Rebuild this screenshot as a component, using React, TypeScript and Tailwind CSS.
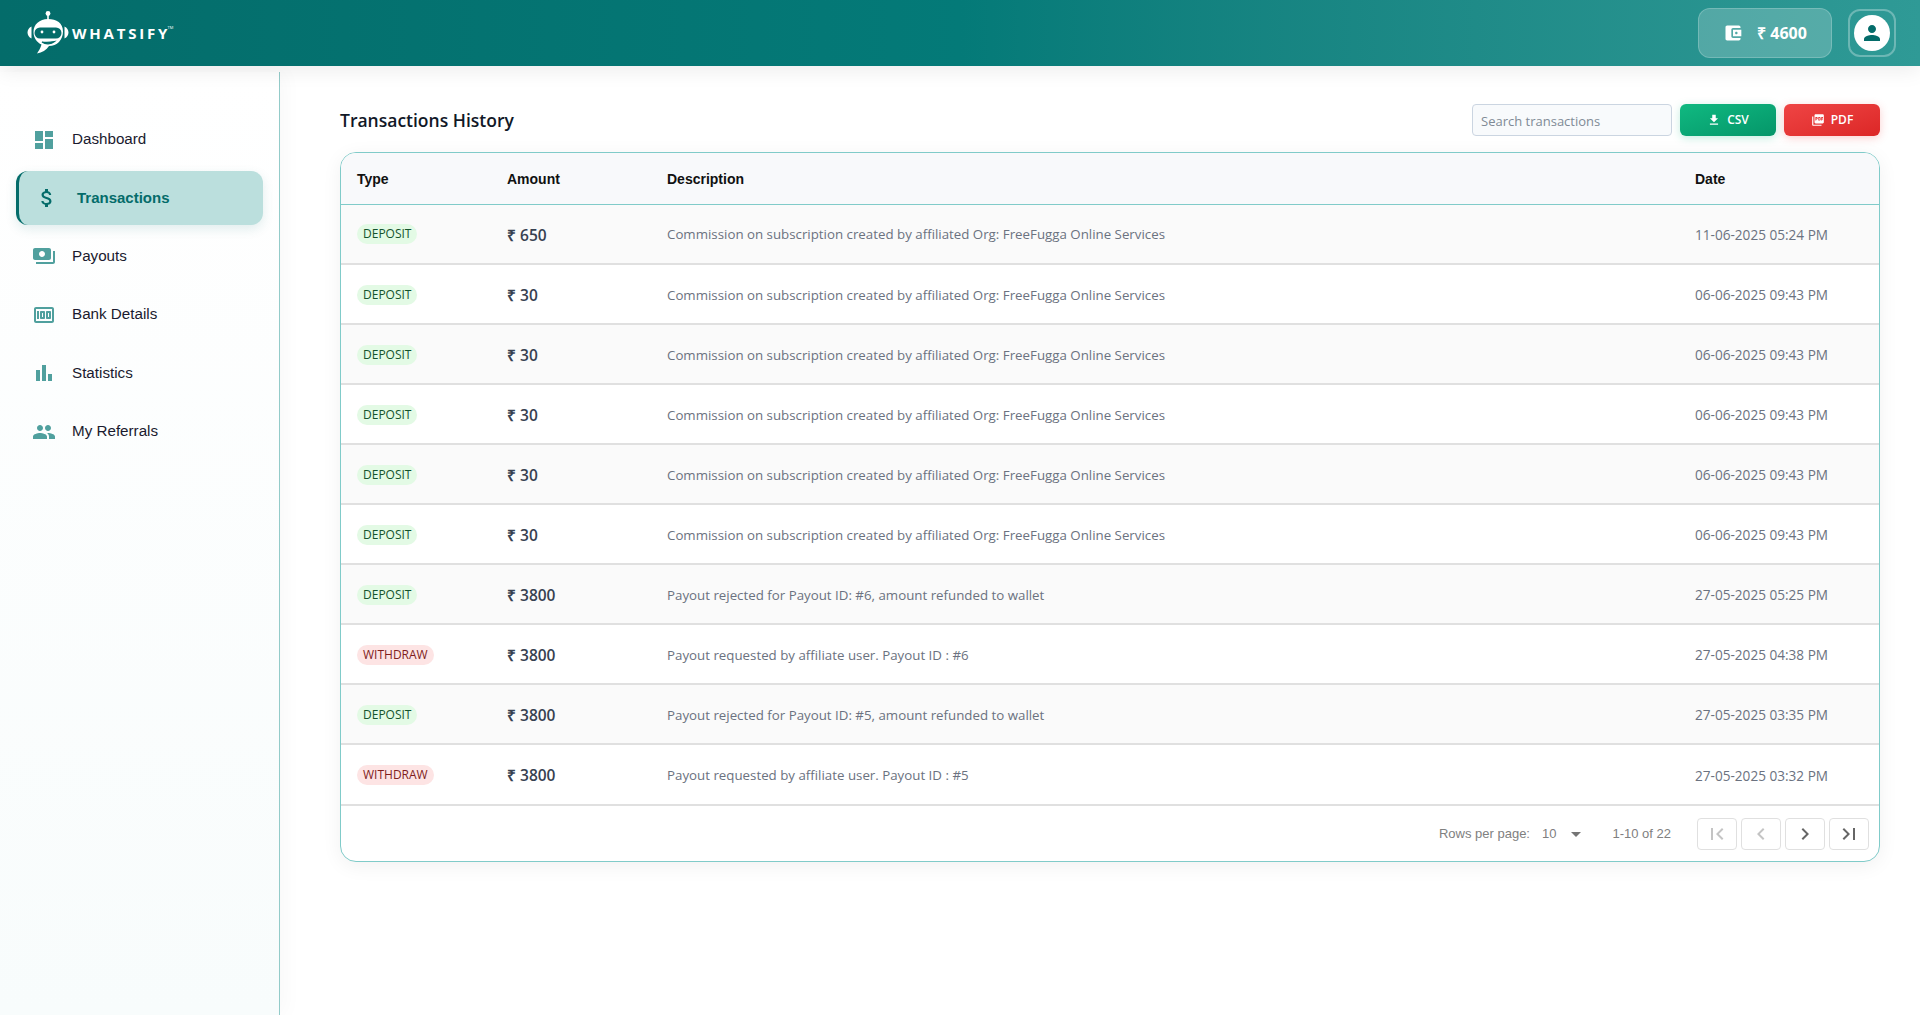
import type { ReactNode } from 'react'

const ICONS = {
  dashboard: 'M3 13h8V3H3v10zm0 8h8v-6H3v6zm10 0h8V11h-8v10zm0-18v6h8V3h-8z',
  money:
    'M11.8 10.9c-2.27-.59-3-1.2-3-2.15 0-1.09 1.01-1.85 2.7-1.85 1.78 0 2.44.85 2.5 2.1h2.21c-.07-1.72-1.12-3.3-3.21-3.81V3h-3v2.16c-1.94.42-3.5 1.68-3.5 3.61 0 2.31 1.91 3.46 4.7 4.13 2.5.6 3 1.48 3 2.41 0 .69-.49 1.79-2.7 1.79-2.06 0-2.87-.92-2.98-2.1h-2.2c.12 2.19 1.76 3.42 3.68 3.83V21h3v-2.15c1.95-.37 3.5-1.5 3.5-3.55 0-2.84-2.43-3.81-4.7-4.4z',
  payments:
    'M19 14V6c0-1.1-.9-2-2-2H3c-1.1 0-2 .9-2 2v8c0 1.1.9 2 2 2h14c1.1 0 2-.9 2-2zm-9-1c-1.66 0-3-1.34-3-3s1.34-3 3-3 3 1.34 3 3-1.34 3-3 3zm13-6v11c0 1.1-.9 2-2 2H4v-2h17V7h2z',
  pin: 'M5 8h2v8H5zm7 0H9c-.55 0-1 .45-1 1v6c0 .55.45 1 1 1h3c.55 0 1-.45 1-1V9c0-.55-.45-1-1-1zm-1 6h-1v-4h1v4zm7-6h-3c-.55 0-1 .45-1 1v6c0 .55.45 1 1 1h3c.55 0 1-.45 1-1V9c0-.55-.45-1-1-1zm-1 6h-1v-4h1v4zM20 4H4c-1.1 0-2 .9-2 2v12c0 1.1.9 2 2 2h16c1.1 0 2-.9 2-2V6c0-1.1-.9-2-2-2zm0 14H4V6h16v12z',
  bars: 'M4 9h4v11H4zm12 4h4v7h-4zm-6-9h4v16h-4z',
  people:
    'M16 11c1.66 0 2.99-1.34 2.99-3S17.66 5 16 5c-1.66 0-3 1.34-3 3s1.34 3 3 3zm-8 0c1.66 0 2.99-1.34 2.99-3S9.66 5 8 5C6.34 5 5 6.34 5 8s1.34 3 3 3zm0 2c-2.33 0-7 1.17-7 3.5V19h14v-2.5c0-2.33-4.67-3.5-7-3.5zm8 0c-.29 0-.62.02-.97.05 1.16.84 1.97 1.97 1.97 3.45V19h6v-2.5c0-2.33-4.67-3.5-7-3.5z',
  wallet:
    'M21 18v1c0 1.1-.9 2-2 2H5c-1.11 0-2-.9-2-2V5c0-1.1.89-2 2-2h14c1.1 0 2 .9 2 2v1h-9c-1.11 0-2 .9-2 2v8c0 1.1.89 2 2 2h9zm-9-2h10V8H12v8zm4-2.5c-.83 0-1.5-.67-1.5-1.5s.67-1.5 1.5-1.5 1.5.67 1.5 1.5-.67 1.5-1.5 1.5z',
  person: 'M12 12c2.21 0 4-1.79 4-4s-1.79-4-4-4-4 1.79-4 4 1.79 4 4 4zm0 2c-2.67 0-8 1.34-8 4v2h16v-2c0-2.66-5.33-4-8-4z',
  download: 'M19 9h-4V3H9v6H5l7 7 7-7zM5 18v2h14v-2H5z',
  pdf: 'M20 2H8c-1.1 0-2 .9-2 2v12c0 1.1.9 2 2 2h12c1.1 0 2-.9 2-2V4c0-1.1-.9-2-2-2zm-8.5 7.5c0 .83-.67 1.5-1.5 1.5H9v2H7.5V7H10c.83 0 1.5.67 1.5 1.5v1zm5 2c0 .83-.67 1.5-1.5 1.5h-2.5V7H15c.83 0 1.5.67 1.5 1.5v3zm4-3H19v1h1.5V11H19v2h-1.5V7h3v1.5zM9 9.5h1v-1H9v1zM4 6H2v14c0 1.1.9 2 2 2h14v-2H4V6zm10 5.5h1v-3h-1v3z',
  first: 'M18.41 16.59L13.82 12l4.59-4.59L17 6l-6 6 6 6zM6 6h2v12H6z',
  prev: 'M15.41 7.41L14 6l-6 6 6 6 1.41-1.41L10.83 12z',
  next: 'M10 6L8.59 7.41 13.17 12l-4.58 4.59L10 18l6-6z',
  last: 'M5.59 7.41L10.18 12l-4.59 4.59L7 18l6-6-6-6zM16 6h2v12h-2z',
}

function Icon({ name, className }: { name: keyof typeof ICONS; className?: string }) {
  return (
    <svg viewBox="0 0 24 24" fill="currentColor" className={className}>
      <path d={ICONS[name]} />
    </svg>
  )
}

function Logo() {
  return (
    <svg viewBox="0 0 42 48" className="h-[48px] w-[42px] shrink-0">
      <circle cx="21" cy="4.500" r="2.400" fill="#fff" />
      <rect x="20.200" y="5" width="1.600" height="6" fill="#fff" />
      <path d="M21 10C12.500 10 6.500 15.500 6.500 23c0 6 3.500 10.500 8 12.500-1 3.500-2.500 6-4.500 9 5-1 9.500-3.500 12-7.500 8 0 14-6 14-14.500S29.500 10 21 10z" fill="#fff" />
      <path d="M4.500 17.500C2 18.500.5 21 .5 23.500s1.500 5 4 6zM37.500 17.500c2.500 1 4 3.500 4 6s-1.500 5-4 6z" fill="#fff" />
      <rect x="7.500" y="18.500" width="27" height="11" rx="5.500" fill="#046c6a" />
      <circle cx="15" cy="23" r="1.400" fill="#fff" />
      <circle cx="27" cy="23" r="1.400" fill="#fff" />
      <path d="M15 33c3.500 2.500 9 2.500 12.500-.5-4 .8-8.500 1-12.500.5z" fill="#046c6a" stroke="#046c6a" strokeWidth="1.200" />
    </svg>
  )
}

const NAV: { label: string; icon: keyof typeof ICONS; active?: boolean }[] = [
  { label: 'Dashboard', icon: 'dashboard' },
  { label: 'Transactions', icon: 'money', active: true },
  { label: 'Payouts', icon: 'payments' },
  { label: 'Bank Details', icon: 'pin' },
  { label: 'Statistics', icon: 'bars' },
  { label: 'My Referrals', icon: 'people' },
]

const COMMISSION = 'Commission on subscription created by affiliated Org: FreeFugga Online Services'

const ROWS = [
  { type: 'DEPOSIT', amount: '650', desc: COMMISSION, date: '11-06-2025 05:24 PM' },
  { type: 'DEPOSIT', amount: '30', desc: COMMISSION, date: '06-06-2025 09:43 PM' },
  { type: 'DEPOSIT', amount: '30', desc: COMMISSION, date: '06-06-2025 09:43 PM' },
  { type: 'DEPOSIT', amount: '30', desc: COMMISSION, date: '06-06-2025 09:43 PM' },
  { type: 'DEPOSIT', amount: '30', desc: COMMISSION, date: '06-06-2025 09:43 PM' },
  { type: 'DEPOSIT', amount: '30', desc: COMMISSION, date: '06-06-2025 09:43 PM' },
  { type: 'DEPOSIT', amount: '3800', desc: 'Payout rejected for Payout ID: #6, amount refunded to wallet', date: '27-05-2025 05:25 PM' },
  { type: 'WITHDRAW', amount: '3800', desc: 'Payout requested by affiliate user. Payout ID : #6', date: '27-05-2025 04:38 PM' },
  { type: 'DEPOSIT', amount: '3800', desc: 'Payout rejected for Payout ID: #5, amount refunded to wallet', date: '27-05-2025 03:35 PM' },
  { type: 'WITHDRAW', amount: '3800', desc: 'Payout requested by affiliate user. Payout ID : #5', date: '27-05-2025 03:32 PM' },
]

function PageButton({ children, disabled }: { children: ReactNode; disabled?: boolean }) {
  return (
    <div
      className={`flex h-[32px] w-[40px] items-center justify-center rounded-[4px] border border-[#e0e0e0] ${
        disabled ? 'text-[#c4c4c4]' : 'text-[#666666]'
      }`}
    >
      {children}
    </div>
  )
}

export default function App() {
  return (
    <div className="flex h-[1015px] flex-col overflow-hidden bg-white font-['Liberation_Sans',sans-serif]">
      <header className="z-10 flex h-[66px] shrink-0 items-center justify-between bg-gradient-to-r from-[#046c6a] via-[#047a78] to-[#2f9a96] pl-[27px] pr-[24px] shadow-[0_4px_20px_rgba(0,0,0,0.08)]">
        <div className="flex items-center gap-[3px]">
          <Logo />
          <div className="relative font-['Open_Sans',sans-serif] text-[15px] font-bold tracking-[2.8px] text-white">
            WHATSIFY
            <span className="absolute -right-[3px] top-[3px] text-[4px] font-normal tracking-normal">TM</span>
          </div>
        </div>
        <div className="flex items-center gap-[16px]">
          <div className="flex h-[50px] w-[134px] items-center justify-center gap-[14px] rounded-[12px] border border-white/20 bg-white/20 text-white">
            <Icon name="wallet" className="size-[20px]" />
            <span className="font-['Open_Sans',sans-serif] text-[16px] font-bold">₹ 4600</span>
          </div>
          <div className="flex size-[48px] items-center justify-center rounded-[12px] border-2 border-white/30">
            <div className="flex size-[36px] items-center justify-center rounded-full bg-white text-[#046c6a]">
              <Icon name="person" className="size-[24px]" />
            </div>
          </div>
        </div>
      </header>

      <div className="flex min-h-0 flex-1">
        <aside className="mt-[6px] w-[280px] shrink-0 border-r border-[#93cbc9] bg-gradient-to-b from-white to-[#f8fcfc] px-[16px] pt-[40.500px] shadow-[4px_0_20px_rgba(0,0,0,0.03)]">
          <nav className="flex flex-col gap-[4px]">
            {NAV.map((item) =>
              item.active ? (
                <div
                  key={item.label}
                  className="flex h-[54px] items-center rounded-[12px] border-l-[3px] border-[#046c6a] bg-[#bbdfdd] pl-[16px] text-[15px] font-bold text-[#046c6a] shadow-[0_4px_12px_rgba(4,108,106,0.12)]"
                >
                  <Icon name={item.icon} className="size-[24px]" />
                  <span className="ml-[18px]">{item.label}</span>
                </div>
              ) : (
                <div key={item.label} className="flex h-[54.500px] items-center pl-[16px] text-[15.200px] text-[#1a1a2e]">
                  <Icon name={item.icon} className="size-[24px] text-[#50a09e]" />
                  <span className="ml-[16px]">{item.label}</span>
                </div>
              ),
            )}
          </nav>
        </aside>

        <main className="min-w-0 flex-1 pl-[60px] pr-[40px] pt-[38px]">
          <div className="mb-[16px] flex h-[32px] items-center justify-between">
            <h1 className="pt-[1px] font-['Open_Sans',sans-serif] text-[17.500px] font-semibold text-[#111827]">Transactions History</h1>
            <div className="flex items-center gap-[8px]">
              <input
                placeholder="Search transactions"
                className="h-[32px] w-[200px] rounded-[4px] border border-[#cbd5e1] bg-[#f8fafc] px-[8px] pt-[1px] font-['Open_Sans',sans-serif] text-[13px] placeholder:text-[#808a96]"
              />
              <div className="flex h-[32px] w-[96px] items-center justify-center gap-[6px] rounded-[6px] bg-gradient-to-br from-[#10b981] to-[#059669] font-['Open_Sans',sans-serif] text-[12px] font-semibold text-white shadow-[0_2px_8px_rgba(16,185,129,0.25)]">
                <Icon name="download" className="size-[14px]" />
                CSV
              </div>
              <div className="flex h-[32px] w-[96px] items-center justify-center gap-[6px] rounded-[6px] bg-gradient-to-br from-[#ef4444] to-[#dc2626] font-['Open_Sans',sans-serif] text-[12px] font-semibold text-white shadow-[0_2px_8px_rgba(239,68,68,0.25)]">
                <Icon name="pdf" className="size-[14px]" />
                PDF
              </div>
            </div>
          </div>

          <div className="overflow-hidden rounded-[16px] border border-[#80cbc9] bg-white shadow-[0_4px_20px_rgba(0,0,0,0.06)]">
            <table className="w-full table-fixed border-collapse">
              <thead>
                <tr className="h-[51px] border-b border-[#80cbc9] bg-[#f8f9fb] text-left text-[14px] text-[#111111]">
                  <th className="w-[166px] pl-[16px] pt-[2px] font-bold">Type</th>
                  <th className="w-[160px] pt-[2px] font-bold">Amount</th>
                  <th className="w-[1028px] pt-[2px] font-bold">Description</th>
                  <th className="pt-[2px] font-bold">Date</th>
                </tr>
              </thead>
              <tbody className="font-['Open_Sans',sans-serif]">
                {ROWS.map((row, i) => (
                  <tr
                    key={i}
                    className={`border-b-2 border-[#e0e0e0] ${i === ROWS.length - 1 ? 'h-[61px]' : 'h-[60px]'} ${
                      i % 2 === 0 ? 'bg-[#fafafa]' : 'bg-white'
                    }`}
                  >
                    <td className="pl-[16px] pt-[1px] leading-none">
                      <span
                        className={`inline-flex h-[20px] items-center rounded-full px-[6px] align-middle text-[12px] font-medium ${
                          row.type === 'DEPOSIT' ? 'bg-[#e3fae5] text-[#14532d]' : 'bg-[#fde4e4] text-[#7f1d1d]'
                        }`}
                      >
                        {row.type}
                      </span>
                    </td>
                    <td className="pt-[3px] text-[15.500px] font-semibold text-[#374151]">₹ {row.amount}</td>
                    <td className="pt-[3px] text-[13.300px] text-[#6b7280]">{row.desc}</td>
                    <td className="pt-[3px] text-[13.600px] text-[#6b7280]">{row.date}</td>
                  </tr>
                ))}
              </tbody>
            </table>
            <div className="flex h-[55px] items-center justify-end pr-[10px] pt-[1px] text-[13px] text-[#808080]">
              <span>Rows per page:</span>
              <span className="ml-[12px]">10</span>
              <svg viewBox="0 0 10 5" className="ml-[15px] h-[5px] w-[10px]" fill="#757575">
                <path d="M0 0h10L5 5z" />
              </svg>
              <span className="ml-[31px] mr-[26px]">1-10 of 22</span>
              <div className="flex gap-[4px]">
                <PageButton disabled><Icon name="first" className="size-[24px]" /></PageButton>
                <PageButton disabled><Icon name="prev" className="size-[24px]" /></PageButton>
                <PageButton><Icon name="next" className="size-[24px]" /></PageButton>
                <PageButton><Icon name="last" className="size-[24px]" /></PageButton>
              </div>
            </div>
          </div>
        </main>
      </div>
    </div>
  )
}
